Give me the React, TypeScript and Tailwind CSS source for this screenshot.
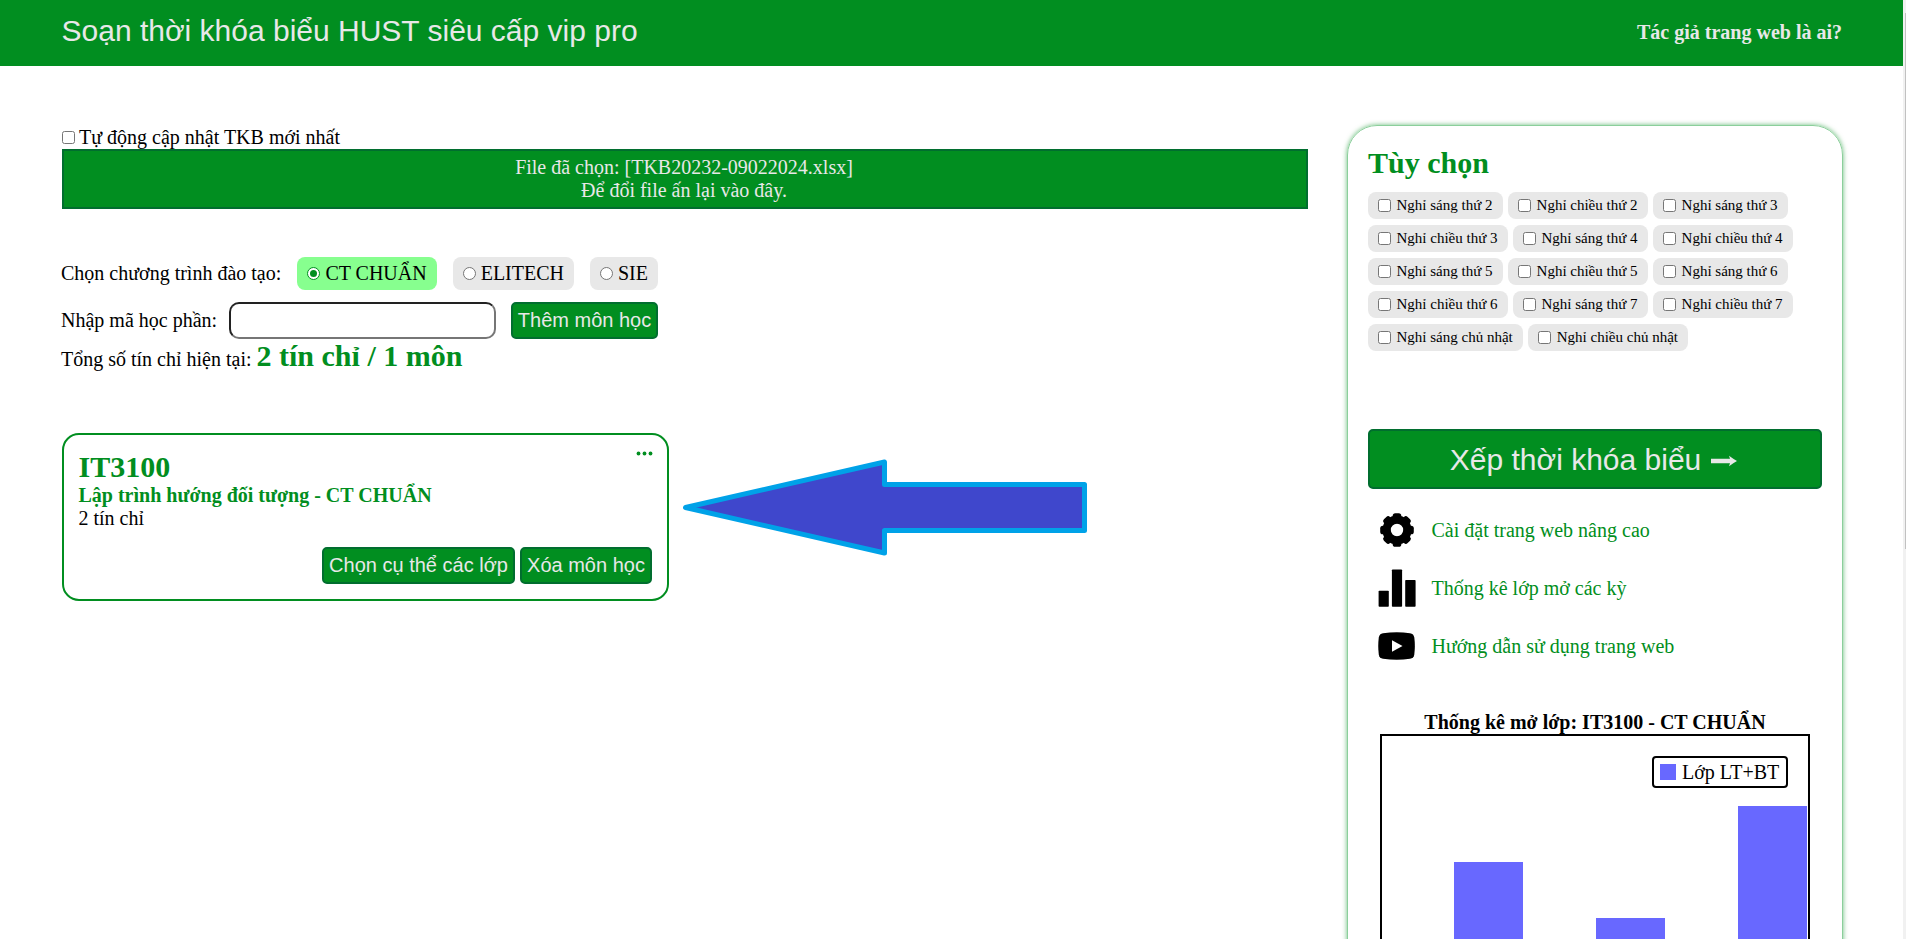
import React from "react";

const days = ["thứ 2", "thứ 3", "thứ 4", "thứ 5", "thứ 6", "thứ 7", "chủ nhật"];
const options = days.flatMap((d) => [`Nghỉ sáng ${d}`, `Nghỉ chiều ${d}`]);

const programs = [
  { name: "CT CHUẨN", on: true },
  { name: "ELITECH", on: false },
  { name: "SIE", on: false },
];

function Box() {
  return <span className="block size-[13px] shrink-0 rounded-[2.5px] border border-[#767676] bg-white" />;
}

function Radio({ on }: { on: boolean }) {
  return (
    <span className={`flex size-[13px] shrink-0 items-center justify-center rounded-full border bg-white ${on ? "border-[#018e20]" : "border-[#767676]"}`}>
      {on && <span className="size-[7px] rounded-full bg-[#018e20]" />}
    </span>
  );
}

function Button({ children, className }: { children: React.ReactNode; className: string }) {
  return (
    <button
      className={`flex h-[37px] items-center justify-center whitespace-nowrap rounded-[5px] border-2 border-[#016e2f] bg-[#018e20] font-['Liberation_Sans',sans-serif] text-[20px] leading-[23px] text-[#e8e8e8] ${className}`}
    >
      {children}
    </button>
  );
}

function Gear() {
  const teeth = [0, 45, 90, 135, 180, 225, 270, 315];
  return (
    <svg viewBox="0 0 38 38" className="size-[38px]">
      {teeth.map((a) => (
        <rect key={a} x="14.700" y="2.200" width="8.600" height="10" rx="2.600" transform={`rotate(${a} 19 19)`} />
      ))}
      <circle cx="19" cy="19" r="10.400" fill="none" stroke="#000" strokeWidth="8.400" />
    </svg>
  );
}

function Bars() {
  return (
    <svg viewBox="0 0 38 38" className="size-[38px]">
      <rect x="0.600" y="21.700" width="10.200" height="16" rx="0.800" />
      <rect x="13.900" y="0.400" width="10.200" height="37.300" rx="0.800" />
      <rect x="27.200" y="11" width="10.400" height="26.700" rx="0.800" />
    </svg>
  );
}

function Video() {
  return (
    <svg viewBox="0 0 38 38" className="size-[38px]">
      <path d="M5 6.2Q19 4.4 32 6.2Q35.8 6.8 36.3 10.5Q37.4 19 36.3 27.5Q35.8 31.2 32 31.8Q19 33.6 5 31.8Q1.300 31.200 .8 27.500Q-.3 19 .8 10.500Q1.300 6.800 5 6.200Z" />
      <path d="M14 13.300L24.500 19L14 24.700Z" fill="#fff" />
    </svg>
  );
}

const links = [
  { icon: <Gear />, text: "Cài đặt trang web nâng cao" },
  { icon: <Bars />, text: "Thống kê lớp mở các kỳ" },
  { icon: <Video />, text: "Hướng dẫn sử dụng trang web" },
];

export default function App() {
  return (
    <div className="flex h-[939px] w-[1906px] overflow-hidden bg-white font-['Liberation_Serif',serif] text-[20px] leading-[23px] text-black">
      <div className="flex w-[1903px] shrink-0 flex-col">
        <header className="flex h-[66px] shrink-0 items-center justify-between bg-[#018e20] pr-[61px] pl-[61.500px] text-[#e8e8e8]">
          <h1 className="pb-1 font-['Liberation_Sans',sans-serif] text-[30px] leading-[36px]">Soạn thời khóa biểu HUST siêu cấp vip pro</h1>
          <a className="pb-[2px] font-bold">Tác giả trang web là ai?</a>
        </header>

        <div className="flex pl-[62px]">
          <main className="w-[1246px] shrink-0 pt-[60px]">
            <label className="flex h-[23px] items-center gap-1">
              <Box />
              Tự động cập nhật TKB mới nhất
            </label>
            <div className="flex h-[60px] flex-col items-center justify-center border-2 border-[#016e2f] bg-[#018e20] pr-[2px] text-[#e8e8e8]">
              <p>File đã chọn: [TKB20232-09022024.xlsx]</p>
              <p>Để đổi file ấn lại vào đây.</p>
            </div>

            <div className="mt-12 flex w-[596px] items-center justify-end gap-4">
              <span className="-ml-px mr-auto whitespace-nowrap">Chọn chương trình đào tạo:</span>
              {programs.map((p) => (
                <label
                  key={p.name}
                  className={`flex h-[33px] items-center gap-[5px] rounded-[8px] px-[10px] ${p.on ? "bg-[#87ff8f]" : "bg-[#e8e8e8]"}`}
                >
                  <Radio on={p.on} />
                  {p.name}
                </label>
              ))}
            </div>

            <div className="mt-3 flex w-[596px] items-center">
              <span className="-ml-px w-[168px] whitespace-nowrap">Nhập mã học phần:</span>
              <input className="h-[37px] w-[267px] rounded-[10px] border-2 border-t-[#222] border-r-[#767676] border-b-[#767676] border-l-[#222] bg-white" />
              <Button className="ml-auto w-[147px]">Thêm môn học</Button>
            </div>

            <p className="-ml-px h-[34px] whitespace-nowrap leading-[34px]">
              Tổng số tín chỉ hiện tại: <b className="text-[30px] text-[#018e20]">2 tín chỉ / 1 môn</b>
            </p>

            <div className="mt-[60px] flex items-center">
              <section className="flex h-[168px] w-[607px] flex-col rounded-[17px] border-2 border-[#018e20] pt-[15px] pr-[15px] pl-[14.500px]">
                <div className="flex items-start justify-between text-[#018e20]">
                  <h2 className="text-[30px] leading-[34px] font-bold">IT3100</h2>
                  <svg viewBox="0 0 17 5" className="mt-px mr-[-1px] h-[5px] w-[17px]" fill="#018e20">
                    <circle cx="2.500" cy="2.500" r="1.900" />
                    <circle cx="8.500" cy="2.500" r="1.900" />
                    <circle cx="14.500" cy="2.500" r="1.900" />
                  </svg>
                </div>
                <h3 className="font-bold text-[#018e20]">Lập trình hướng đối tượng - CT CHUẨN</h3>
                <p>2 tín chỉ</p>
                <div className="mt-[17px] flex justify-end gap-[5px]">
                  <Button className="w-[193px]">Chọn cụ thể các lớp</Button>
                  <Button className="w-[132px]">Xóa môn học</Button>
                </div>
              </section>
              <svg viewBox="0 0 405 98" className="mt-[-20px] ml-[14px] h-[98px] w-[405px]">
                <path
                  d="M2.500 49.500L201.500 4V26.500H401.500V72.500H201.500V95Z"
                  fill="#3f47cc"
                  stroke="#00a2e8"
                  strokeWidth="5"
                  strokeLinejoin="round"
                />
              </svg>
            </div>
          </main>

          <aside className="mt-[59px] ml-[39px] flex h-[1100px] w-[496px] shrink-0 flex-col rounded-[30px] border border-[#8bcf9b] px-5 pt-[20px] shadow-[0_0_5px_#018e2099]">
            <h2 className="text-[30px] leading-[34px] font-bold text-[#018e20]">Tùy chọn</h2>
            <div className="mt-[12px] flex h-[160px] w-[440px] flex-wrap content-start gap-x-[5px] gap-y-[6px] text-[15px]">
              {options.map((o) => (
                <label key={o} className="flex h-[27px] items-center gap-[5.500px] rounded-[8px] bg-[#e8e8e8] pr-[10.500px] pl-[10px] whitespace-nowrap">
                  <Box />
                  {o}
                </label>
              ))}
            </div>
            <button className="mt-[77px] flex h-[60px] w-[454px] items-center justify-center gap-[10px] rounded-[5px] border-2 border-[#016e2f] bg-[#018e20] pt-[2px] pr-[3px] font-['Liberation_Sans',sans-serif] text-[30px] leading-[34px] whitespace-nowrap text-[#e8e8e8]">
              Xếp thời khóa biểu
              <svg viewBox="0 0 26 12" className="mt-px h-3 w-[26px]" fill="#e8e8e8">
                <path d="M0 3.800H19L18 .8Q22 3.800 26 6Q22 8.200 18 11.200L19 8.200H0Z" />
              </svg>
            </button>
            <nav className="mt-[22px] flex flex-col gap-5 pl-[10px] text-[#018e20]">
              {links.map((l) => (
                <a key={l.text} className="flex h-[38px] items-center gap-[15.500px]">
                  <span className="text-black">{l.icon}</span>
                  {l.text}
                </a>
              ))}
            </nav>

            <h4 className="mt-[46px] ml-[12px] w-[430px] text-center font-bold">Thống kê mở lớp: IT3100 - CT CHUẨN</h4>
            <div className="ml-[12px] flex h-[356px] w-[430px] flex-col border-2 border-black">
              <div className="mt-5 mr-5 flex h-8 w-[136px] shrink-0 items-center gap-[6px] self-end rounded-[4px] border-2 border-black pl-[6px] whitespace-nowrap">
                <span className="size-4 bg-[#6868ff]" />
                Lớp LT+BT
              </div>
              <div className="mt-[18px] flex grow items-end gap-[73px] pl-[72px]">
                <div className="h-[226px] w-[69px] shrink-0 bg-[#6868ff]" />
                <div className="h-[170px] w-[69px] shrink-0 bg-[#6868ff]" />
                <div className="h-[282px] w-[69px] shrink-0 bg-[#6868ff]" />
              </div>
            </div>
          </aside>
        </div>
      </div>
      <div className="flex w-[3px] flex-col bg-[#f1f1f1] pt-[13px] pl-[2px]">
        <div className="h-[536px] bg-[#c1c1c1]" />
      </div>
    </div>
  );
}
